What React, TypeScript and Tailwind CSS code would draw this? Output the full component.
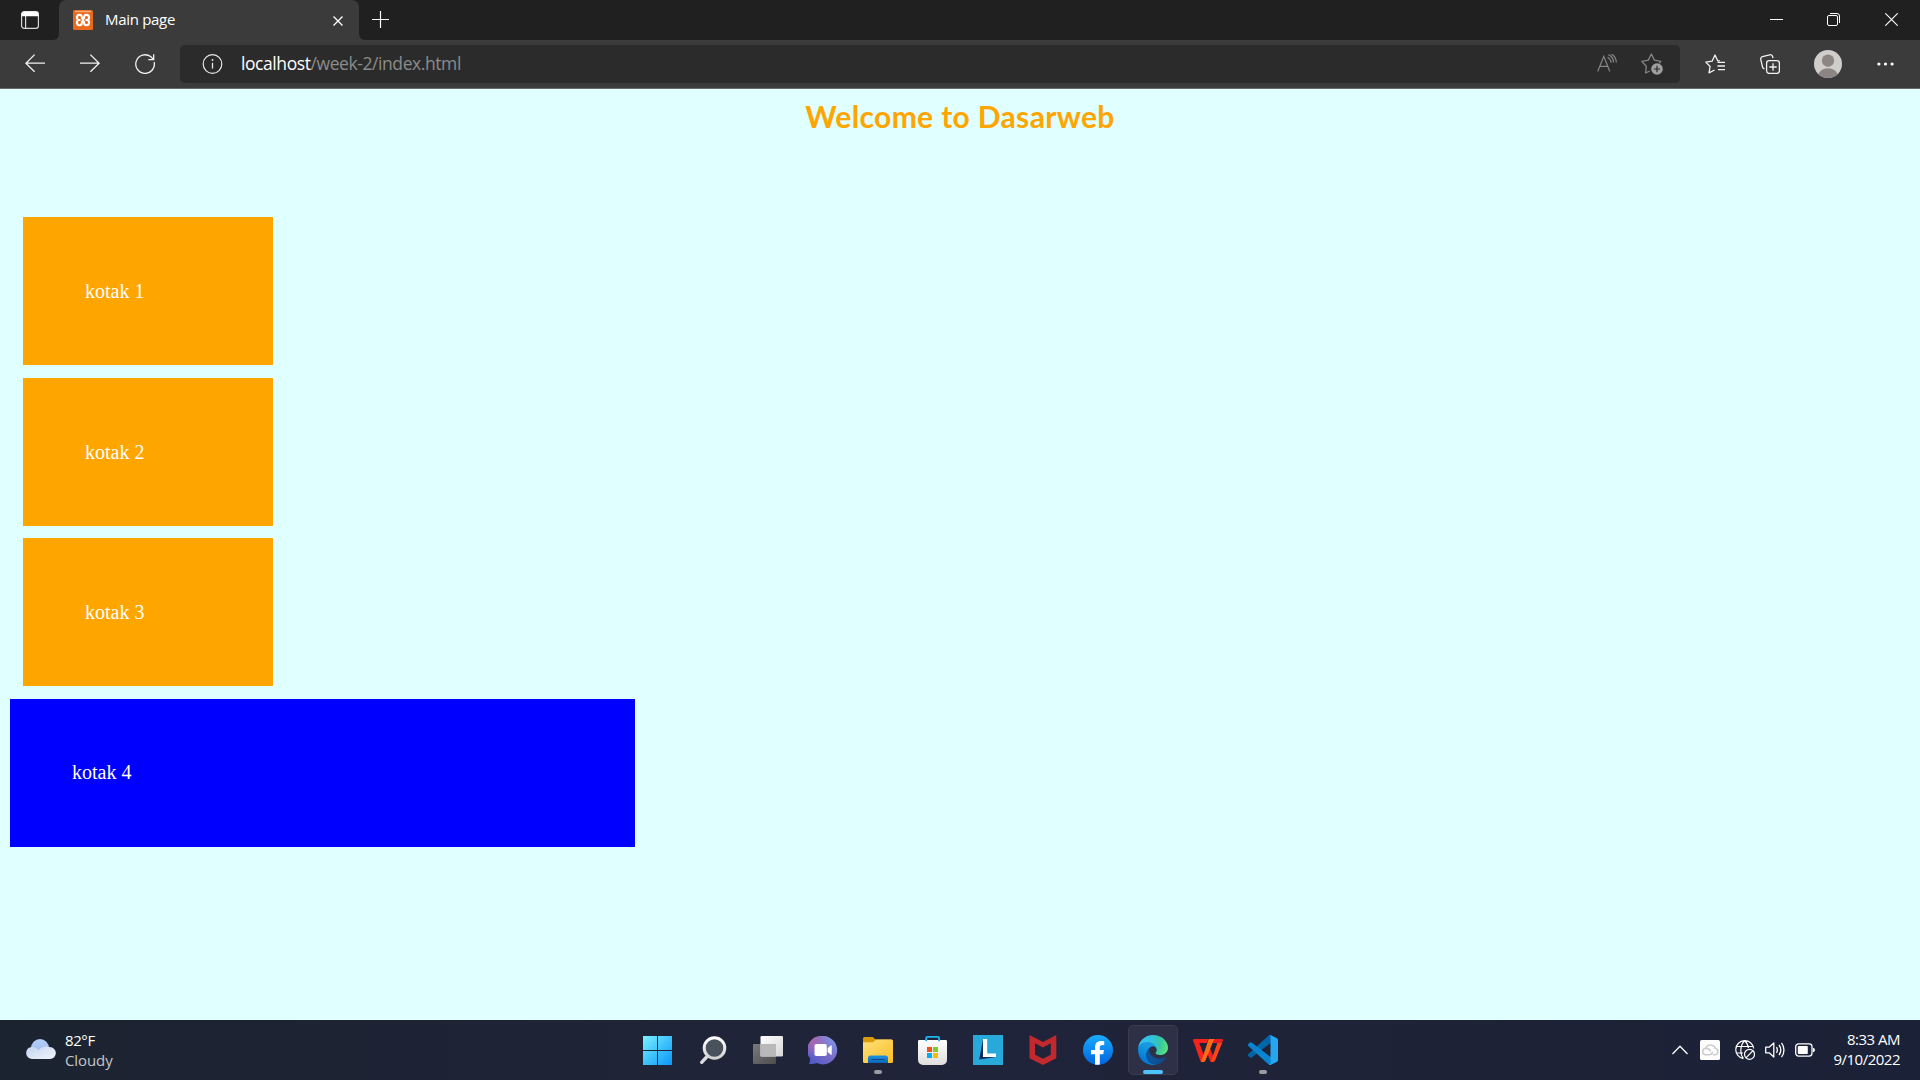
import type { ReactNode } from "react";

const ui = "font-['Open_Sans','Noto_Sans',sans-serif]";

/* ---------- Browser chrome ---------- */

function TabStrip() {
  return (
    <div className="flex h-10 items-stretch bg-[#202020]">
      <div className="flex w-[59px] items-center bg-[#3b3b3b]">
        <div className="flex h-full w-full items-center rounded-br-[6px] bg-[#202020] pl-[21px]">
          <svg width="18" height="18" viewBox="0 0 18 18">
            <rect x="0.6" y="0.6" width="16.8" height="16.8" rx="2.6" fill="none" stroke="#d8d8d8" strokeWidth="1.2" />
            <path d="M0.5 5.2V3A2.6 2.6 0 0 1 3 .4h12A2.6 2.6 0 0 1 17.500 3v2.200z" fill="#fff" />
            <path d="M4.600 5v12.500" stroke="#d8d8d8" strokeWidth="1.200" />
          </svg>
        </div>
      </div>
      <div className="flex w-[300px] bg-[#202020]">
        <div className="flex w-full items-center rounded-t-[7px] bg-[#3b3b3b] pl-[14px]">
          <svg width="20" height="20" viewBox="0 0 20 20">
            <rect width="20" height="20" rx="1.500" fill="#e96a1c" />
            <rect x="2" y="0.800" width="16" height="1.400" fill="#f6ab7b" />
            <path
              d="M5.400 10C3.200 8.900 3.300 5.200 6.200 4.900 8.700 4.700 8.900 6.300 9 8.300h2c.1-2 .3-3.600 2.800-3.400 2.900.3 3 4 .8 5.100 2.200 1.100 2.100 5-.8 5.300-2.500.2-2.700-1.500-2.800-3.600H9c-.1 2.100-.3 3.800-2.800 3.600-2.900-.3-3-4.200-.8-5.300z"
              fill="none"
              stroke="#fff"
              strokeWidth="2.100"
              strokeLinejoin="round"
            />
            <path d="M5.500 10h2M12.500 10h2" stroke="#fff" strokeWidth="2" />
            <path d="M8.800 10h2.400" stroke="#fff" strokeWidth="3.200" />
          </svg>
          <span className="mb-[2px] ml-[12px] text-[15px] leading-5 tracking-[-0.3px] text-white">Main page</span>
          <svg className="mt-[2px] mr-[16px] ml-auto" width="10" height="10" viewBox="0 0 10 10">
            <path d="M0.500 0.500l9 9M9.500 0.500l-9 9" stroke="#fff" strokeWidth="1.300" />
          </svg>
        </div>
      </div>
      <div className="flex grow bg-[#3b3b3b]">
        <div className="flex grow items-center rounded-bl-[6px] bg-[#202020]">
          <svg className="mb-px ml-[13px]" width="17" height="17" viewBox="0 0 17 17">
            <path d="M8.500 0v17M0 8.500h17" stroke="#fff" strokeWidth="1.200" />
          </svg>
          <div className="ml-auto flex pb-px">
            <div className="flex w-[57px] items-center justify-center">
              <svg width="13" height="13" viewBox="0 0 13 13">
                <path d="M0 6.500h13" stroke="#fff" strokeWidth="1" />
              </svg>
            </div>
            <div className="flex w-[57px] items-center justify-center">
              <svg width="13" height="13" viewBox="0 0 13 13" fill="none" stroke="#fff">
                <rect x="0.500" y="2.500" width="10" height="10" rx="1.500" />
                <path d="M3 0.500h7a2.500 2.500 0 0 1 2.500 2.500v7" />
              </svg>
            </div>
            <div className="flex w-[58px] items-center justify-center">
              <svg width="13" height="13" viewBox="0 0 13 13">
                <path d="M0.300 0.300l12.400 12.400M12.700 0.300L0.300 12.700" stroke="#fff" strokeWidth="1.100" />
              </svg>
            </div>
          </div>
        </div>
      </div>
    </div>
  );
}

function ToolCell({ children }: { children: ReactNode }) {
  return <div className="flex w-[50px] items-center justify-center">{children}</div>;
}

function Toolbar() {
  return (
    <div className="flex h-[49px] items-center border-b border-[#6a6a6a] bg-[#3b3b3b] pl-[10px]">
      <div className="flex gap-[5px]">
        <ToolCell>
          <svg width="20" height="20" viewBox="0 0 20 20" fill="none" stroke="#f2f2f2" strokeWidth="1.300">
            <path d="M20 9.200H.9M9.600.6L.9 9.200l8.700 8.600" />
          </svg>
        </ToolCell>
        <ToolCell>
          <svg width="20" height="20" viewBox="0 0 20 20" fill="none" stroke="#f2f2f2" strokeWidth="1.300">
            <path d="M0 9.200h19.100M10.400.6l8.700 8.600-8.700 8.600" />
          </svg>
        </ToolCell>
        <ToolCell>
          <svg width="20" height="20" viewBox="0 0 20 20" fill="none" stroke="#f2f2f2" strokeWidth="1.300">
            <path d="M19.200 8.200A9.300 9.300 0 1 1 15.600 2.600L18.600 5.400M18.700.3v5.300h-5.400" />
          </svg>
        </ToolCell>
      </div>
      <div className="ml-[10px] flex h-[38px] w-[1500px] items-center rounded-[5px] bg-[#2b2b2b] pr-[17px] pl-[22px]">
        <svg width="21" height="20" viewBox="0 0 21 20">
          <circle cx="10.500" cy="10" r="9.300" fill="none" stroke="#e8e8e8" strokeWidth="1.200" />
          <path d="M10.500 8.800v5.800" stroke="#e8e8e8" strokeWidth="1.300" />
          <circle cx="10.500" cy="6" r="0.900" fill="#e8e8e8" />
        </svg>
        <div className="mb-[2px] ml-[18px] text-[17.5px] leading-6 tracking-[-0.42px] text-[#8c8c8c]">
          <span className="text-white">localhost</span>/week-2/index.html
        </div>
        <svg className="ml-auto" width="20" height="20" viewBox="0 0 20 20" fill="none" stroke="#858585" strokeWidth="1.200">
          <path d="M0.700 17.500L6.800 2.300l6 15.200M2.900 12.300h7.800" />
          <path d="M10.500 3.200c2.200 1.100 3.400 3 3.600 5.500M11.500.6c3.100 1.400 5 4.300 5 7.900M14.300 0c3 1.700 4.900 4.600 5 8.500" />
        </svg>
        <svg className="ml-[24px]" width="22" height="22" viewBox="0 0 22 22">
          <path
            d="M8.800 18L4.600 20l.7-6.700L.8 8.400l6.500-1.300L10.300 1l3.200 6.100 6.300 1.300-1.600 1.900"
            fill="none"
            stroke="#858585"
            strokeWidth="1.300"
            strokeLinejoin="round"
          />
          <circle cx="16" cy="16" r="5.800" fill="#a0a0a0" />
          <path d="M16 12.800v6.400M12.800 16h6.400" stroke="#2b2b2b" strokeWidth="1.200" />
        </svg>
      </div>
      <div className="ml-[10px] flex gap-[5px]">
        <ToolCell>
          <svg width="20" height="20" viewBox="0 0 20 20" fill="none" stroke="#f2f2f2" strokeWidth="1.300">
            <path d="M9.500 16L4 18.800l1.100-6.300L.8 8.100l6.300-.9L10 1l2.700 5.800h2.200" strokeLinejoin="round" />
            <path d="M12.500 8.300H20M12.500 12H20M13 15.700h7" />
          </svg>
        </ToolCell>
        <ToolCell>
          <svg width="20" height="20" viewBox="0 0 20 20" fill="none" stroke="#f2f2f2" strokeWidth="1.300">
            <rect x="6.600" y="6.600" width="12.800" height="12.800" rx="2.600" />
            <path d="M13 9.300v7.400M9.300 13h7.400M4.500 15a3 3 0 0 1-2-2.200L.8 5.600a2.400 2.400 0 0 1 1.700-3L9.600.8a2.400 2.400 0 0 1 3 1.700l.4 1.700" />
          </svg>
        </ToolCell>
      </div>
      <div className="ml-[5px] flex w-[56px] justify-center">
        <svg width="28" height="28" viewBox="0 0 28 28">
          <defs>
            <clipPath id="avatar">
              <circle cx="14" cy="14" r="14" />
            </clipPath>
          </defs>
          <g clipPath="url(#avatar)">
            <rect width="28" height="28" fill="#d0cecb" />
            <circle cx="14" cy="10.700" r="6.200" fill="#8b8683" />
            <ellipse cx="14" cy="25.500" rx="9.500" ry="7.300" fill="#8b8683" />
          </g>
        </svg>
      </div>
      <div className="flex w-[58px] justify-center">
        <svg width="17" height="4" viewBox="0 0 17 4" fill="#fff">
          <circle cx="1.900" cy="2" r="1.600" />
          <circle cx="8.500" cy="2" r="1.600" />
          <circle cx="15.100" cy="2" r="1.600" />
        </svg>
      </div>
    </div>
  );
}

/* ---------- Page ---------- */

function Page() {
  return (
    <main className="flex h-[931px] flex-col items-start bg-[#e0ffff]">
      <h1 className="mt-[7px] w-full text-center font-['Lato',sans-serif] text-[30px] leading-10 font-bold tracking-[0.35px] text-[#ffa500]">
        Welcome to Dasarweb
      </h1>
      <section className="mt-[81px] flex flex-col gap-[12.6px] pl-[10px] font-['Liberation_Serif',serif] text-[20px] text-white">
        {["kotak 1", "kotak 2", "kotak 3"].map((t) => (
          <div key={t} className="ml-[13px] flex h-[148px] w-[250px] items-center bg-[#ffa500] pl-[62px]">
            {t}
          </div>
        ))}
        <div className="flex h-[148px] w-[625px] items-center bg-[#0000ff] pb-px pl-[62px]">kotak 4</div>
      </section>
    </main>
  );
}

/* ---------- Taskbar icons ---------- */

const StartIcon = () => (
  <svg width="30" height="30" viewBox="0 0 30 30">
    <defs>
      <linearGradient id="win" x1="0" y1="0" x2="30" y2="30" gradientUnits="userSpaceOnUse">
        <stop offset="0" stopColor="#7df3ff" />
        <stop offset="0.500" stopColor="#3fc3fb" />
        <stop offset="1" stopColor="#0c93f8" />
      </linearGradient>
    </defs>
    <path d="M0 1h14v14H0zM15 1h14v14H15zM0 16h14v14H0zM15 16h14v14H15z" fill="url(#win)" />
  </svg>
);

const SearchIcon = () => (
  <svg width="30" height="30" viewBox="0 0 30 30">
    <defs>
      <linearGradient id="lens" x1="0" y1="0" x2="0" y2="1">
        <stop offset="0" stopColor="#fff" />
        <stop offset="1" stopColor="#d2d2d2" />
      </linearGradient>
    </defs>
    <path d="M10 20.500l-6.300 6.800" stroke="#dcdcdc" strokeWidth="3.400" strokeLinecap="round" />
    <circle cx="16.500" cy="13" r="10.300" fill="#49515c" stroke="url(#lens)" strokeWidth="3" />
  </svg>
);

const TaskViewIcon = () => (
  <svg width="30" height="30" viewBox="0 0 30 30">
    <defs>
      <linearGradient id="tvf" x1="0" y1="0" x2="1" y2="1">
        <stop offset="0" stopColor="#fff" />
        <stop offset="1" stopColor="#d6d6d6" />
      </linearGradient>
      <linearGradient id="tvb" x1="0" y1="0" x2="1" y2="1">
        <stop offset="0" stopColor="#7a7a7a" />
        <stop offset="1" stopColor="#4d4d4d" />
      </linearGradient>
    </defs>
    <rect x="0" y="9" width="23" height="20" rx="1.200" fill="url(#tvb)" />
    <rect x="7.500" y="1" width="22.500" height="20.500" rx="1.200" fill="url(#tvf)" />
    <rect x="7.500" y="9" width="15.500" height="12.500" fill="#b9b9b9" />
  </svg>
);

const ChatIcon = () => (
  <svg width="30" height="30" viewBox="0 0 30 30">
    <defs>
      <linearGradient id="chat" x1="0.900" y1="0.100" x2="0.200" y2="1">
        <stop offset="0" stopColor="#7f95ea" />
        <stop offset="0.500" stopColor="#7a6cc8" />
        <stop offset="1" stopColor="#5059c9" />
      </linearGradient>
      <radialGradient id="chatPink" cx="0.200" cy="0.200" r="0.550">
        <stop offset="0" stopColor="#a868ae" />
        <stop offset="1" stopColor="#a868ae" stopOpacity="0" />
      </radialGradient>
    </defs>
    <path d="M15 1a14.200 14.200 0 1 1-6.200 27C6.500 29 3.500 29.300.8 29c1.200-1.600 1.600-3.500 1.200-5.500A14.200 14.200 0 0 1 15 1z" fill="url(#chat)" />
    <path d="M15 1a14.200 14.200 0 1 1-6.200 27C6.500 29 3.500 29.300.8 29c1.200-1.600 1.600-3.500 1.200-5.500A14.200 14.200 0 0 1 15 1z" fill="url(#chatPink)" />
    <rect x="6.500" y="9" width="12.300" height="12" rx="1.800" fill="#fff" />
    <path d="M20 13.300l3.300-2.700v9L20 17z" fill="#fff" stroke="#fff" strokeWidth="0.800" strokeLinejoin="round" />
  </svg>
);

const FolderIcon = () => (
  <svg width="30" height="30" viewBox="0 0 30 30">
    <defs>
      <linearGradient id="fold" x1="0" y1="0" x2="1" y2="1">
        <stop offset="0" stopColor="#ffe07c" />
        <stop offset="1" stopColor="#fbbf26" />
      </linearGradient>
      <linearGradient id="foldBlue" x1="0" y1="0" x2="0" y2="1">
        <stop offset="0" stopColor="#1b94e2" />
        <stop offset="1" stopColor="#0f63b5" />
      </linearGradient>
    </defs>
    <path d="M0 3.500A1.500 1.500 0 0 1 1.500 2h8.200l3 2.500H28A1.500 1.500 0 0 1 29.500 6v6H0z" fill="#dc9c0a" />
    <path d="M0 7.200h10l3-2.700h15.500A1.500 1.500 0 0 1 30 6v20.500A1.500 1.500 0 0 1 28.500 28h-27A1.500 1.500 0 0 1 0 26.500z" fill="url(#fold)" />
    <path d="M5 28v-5a2.500 2.500 0 0 1 2.500-2.500h15A2.500 2.500 0 0 1 25 23v5z" fill="url(#foldBlue)" />
    <path d="M9 24.500h12" stroke="#0b4a8f" strokeWidth="1.200" strokeLinecap="round" />
  </svg>
);

const StoreIcon = () => (
  <svg width="30" height="30" viewBox="0 0 30 30">
    <defs>
      <linearGradient id="store" x1="0" y1="0" x2="0" y2="1">
        <stop offset="0" stopColor="#fff" />
        <stop offset="1" stopColor="#dedede" />
      </linearGradient>
    </defs>
    <path d="M0 6.200A1.200 1.200 0 0 1 1.200 5h26.600A1.200 1.200 0 0 1 29 6.200V25a5 5 0 0 1-5 5H5a5 5 0 0 1-5-5z" fill="url(#store)" />
    <path d="M8.200 6.300V3.200A1.300 1.300 0 0 1 9.500 1.900h10.300a1.300 1.300 0 0 1 1.300 1.300v3.100" fill="none" stroke="#20b4ee" strokeWidth="1.900" />
    <path d="M9 12h5v5H9z" fill="#f1511b" />
    <path d="M15 12h5v5h-5z" fill="#80cc28" />
    <path d="M9 18h5v5H9z" fill="#00adef" />
    <path d="M15 18h5v5h-5z" fill="#fbbc09" />
  </svg>
);

const LenovoIcon = () => (
  <svg width="30" height="30" viewBox="0 0 30 30">
    <rect width="30" height="30" fill="#27aad9" />
    <path d="M10 4.500L6.200 24.500 23 22l-9-1z" fill="#0a2a66" />
    <path d="M10 4h4.200v14.500H23V22H10z" fill="#fff" />
  </svg>
);

const McAfeeIcon = () => (
  <svg width="30" height="30" viewBox="0 0 30 30">
    <path
      d="M1.500 0L15 7 28.300 0v23.300L15 30 1.500 23.300zM7 8.300v11.500l8 4 7.800-4V8.300L15 12.600z"
      fill="#c1292e"
      fillRule="evenodd"
    />
  </svg>
);

const FacebookIcon = () => (
  <svg width="30" height="30" viewBox="0 0 30 30">
    <defs>
      <linearGradient id="fb" x1="0" y1="0" x2="0" y2="1">
        <stop offset="0" stopColor="#18acfe" />
        <stop offset="1" stopColor="#0163e0" />
      </linearGradient>
    </defs>
    <circle cx="15" cy="15" r="15" fill="url(#fb)" />
    <path d="M20.200 19.300l.8-4.300h-4.200v-2.400c0-1.600.8-2.600 2.500-2.600h1.900V6.200c-1.100-.2-2.100-.3-3.100-.3-3.700 0-6 2.200-6 6V15H8v4.300h4V29.600a15 15 0 0 0 4.800 0V19.300z" fill="#fff" />
  </svg>
);

const EdgeIcon = () => (
  <svg width="30" height="30" viewBox="0 0 256 256">
    <defs>
      <linearGradient id="e1" x1="58" y1="177" x2="236" y2="177" gradientUnits="userSpaceOnUse">
        <stop offset="0" stopColor="#0c59a4" />
        <stop offset="1" stopColor="#114a8b" />
      </linearGradient>
      <linearGradient id="e2" x1="150" y1="90" x2="45" y2="230" gradientUnits="userSpaceOnUse">
        <stop offset="0" stopColor="#1b9de2" />
        <stop offset="0.400" stopColor="#1595df" />
        <stop offset="1" stopColor="#0078d4" />
      </linearGradient>
      <radialGradient id="e3" cx="26" cy="48" r="256" gradientUnits="userSpaceOnUse">
        <stop offset="0" stopColor="#35c1f1" />
        <stop offset="0.350" stopColor="#2fc2df" />
        <stop offset="0.650" stopColor="#36c7a5" />
        <stop offset="1" stopColor="#66eb6e" />
      </radialGradient>
    </defs>
    <path d="M231 190.500c-3.400 1.800-6.900 3.400-10.500 4.700a101.500 101.500 0 0 1-35.900 6.500c-47.300 0-88.500-32.500-88.500-74.300a31.500 31.500 0 0 1 16.400-27.300c-42.800 1.800-53.800 46.400-53.800 72.500 0 74 68.100 81.400 82.800 81.400 7.900 0 19.800-2.300 27-4.600l1.300-.4a128.300 128.300 0 0 0 66.600-52.800 4 4 0 0 0-5.400-5.700z" fill="url(#e1)" />
    <path d="M105.700 241.400a79.200 79.200 0 0 1-22.700-21.300 80.700 80.700 0 0 1 29.500-120c3.200-1.500 8.500-4.100 15.600-4a32.400 32.400 0 0 1 25.700 13 31.900 31.900 0 0 1 6.300 18.700c0-.2 24.500-79.600-80-79.600-43.900 0-80 41.600-80 78.200a130.200 130.200 0 0 0 12.100 56 128 128 0 0 0 156.400 67 75.500 75.500 0 0 1-62.800-8z" fill="url(#e2)" />
    <path d="M152.300 148.900c-.9 1-3.400 2.500-3.400 5.600 0 2.600 1.700 5.200 4.800 7.300 14.300 10 41.400 8.600 41.500 8.600a59.600 59.600 0 0 0 30.300-8.300 61.400 61.400 0 0 0 30.400-52.900c.3-22.400-8-37.300-11.300-43.900C223.500 23.900 177.700 0 128 0A128 128 0 0 0 0 126.200c.5-36.500 36.800-66 80-66 3.500 0 23.500.3 42 10a72.600 72.600 0 0 1 30.900 29.300c6.100 10.600 7.200 24.100 7.200 29.500s-2.700 13.300-7.800 19.900z" fill="url(#e3)" />
  </svg>
);

const WpsIcon = () => (
  <svg width="30" height="30" viewBox="0 0 30 30">
    <path d="M1 4h14.500l-1.700 4H6.300L11 20.500 9.500 27h-.7a1.500 1.500 0 0 1-1.400-.9L.1 5.400A1 1 0 0 1 1 4z" fill="#f5231c" />
    <path d="M16.400 12L20.300 21.500l-.8 5.500h-.9a1.500 1.500 0 0 1-1.400-.9L14 17.500z" fill="#f5231c" />
    <path d="M20.800 4H29a1 1 0 0 1 .9 1.400L28.600 9.500 24 8h-4.800z" fill="#e81d1f" />
    <path d="M15.700 4h5.500L12.400 25.500a2.200 2.200 0 0 1-2.100 1.500H8z" fill="#ff6a18" />
    <path d="M24.400 8h4.600l-6.900 17.600A2.200 2.200 0 0 1 20 27h-2.300z" fill="#ff4417" />
  </svg>
);

const CodeIcon = () => (
  <svg width="30" height="30" viewBox="0 0 100 100">
    <path d="M96.460 10.800L75.860.88a6.230 6.230 0 0 0-7.100 1.200L1.300 63.580a4.170 4.170 0 0 0 0 6.160l5.500 5a4.170 4.170 0 0 0 5.300.24L93.360 13.370A4.130 4.130 0 0 1 100 16.660v-.24a6.250 6.250 0 0 0-3.540-5.630z" fill="#0065a9" />
    <path d="M96.460 89.200L75.860 99.120a6.230 6.230 0 0 1-7.100-1.200L1.300 36.420a4.170 4.170 0 0 1 0-6.160l5.500-5a4.170 4.170 0 0 1 5.300-.24L93.360 86.630A4.130 4.130 0 0 0 100 83.340v.24a6.250 6.250 0 0 1-3.540 5.630z" fill="#0a84cf" />
    <path d="M75.860 99.130a6.230 6.230 0 0 1-7.100-1.210A3.660 3.660 0 0 0 75 95.330V4.670a3.660 3.660 0 0 0-6.250-2.590 6.230 6.230 0 0 1 7.100-1.210l20.600 9.900A6.250 6.250 0 0 1 100 16.400v67.180a6.250 6.250 0 0 1-3.540 5.630z" fill="#27a5f0" />
  </svg>
);

type App = { id: string; icon: ReactNode; state?: "open" | "active" };

const apps: App[] = [
  { id: "start", icon: <StartIcon /> },
  { id: "search", icon: <SearchIcon /> },
  { id: "taskview", icon: <TaskViewIcon /> },
  { id: "chat", icon: <ChatIcon /> },
  { id: "files", icon: <FolderIcon />, state: "open" },
  { id: "store", icon: <StoreIcon /> },
  { id: "lenovo", icon: <LenovoIcon /> },
  { id: "mcafee", icon: <McAfeeIcon /> },
  { id: "facebook", icon: <FacebookIcon /> },
  { id: "edge", icon: <EdgeIcon />, state: "active" },
  { id: "wps", icon: <WpsIcon /> },
  { id: "code", icon: <CodeIcon />, state: "open" },
];

function TaskButton({ app }: { app: App }) {
  const active = app.state === "active";
  return (
    <div
      className={
        active
          ? "flex h-[50px] w-[50px] flex-col items-center rounded-[5px] border border-[#3a3d50] bg-[#2d3046] pt-[9px]"
          : "flex h-[50px] w-[50px] flex-col items-center pt-[10px]"
      }
    >
      {app.icon}
      {active && <div className="mt-[5px] h-1 w-5 rounded-full bg-[#4cc2ff]" />}
      {app.state === "open" && <div className="mt-[5px] h-1 w-2 rounded-full bg-[#9a9ba3]" />}
    </div>
  );
}

function Tray() {
  return (
    <div className="ml-auto flex items-center pr-5">
      <svg width="16" height="10" viewBox="0 0 16 10">
        <path d="M0.500 9L8 1.200 15.500 9" fill="none" stroke="#fff" strokeWidth="1.300" />
      </svg>
      <svg className="ml-3" width="20" height="20" viewBox="0 0 20 20">
        <rect width="20" height="20" rx="1.500" fill="#fff" />
        <path
          d="M13.500 14.800H15a3.300 3.300 0 0 0 .3-6.500A5.200 5.200 0 0 0 5.600 8.300a3.300 3.300 0 0 0-.4 6.500h4.200c1.700 0 2.600-1 3.100-2.200"
          fill="none"
          stroke="#cdcdcd"
          strokeWidth="1.600"
          strokeLinecap="round"
        />
        <path d="M5.800 8.400c2.300-.2 3.700.7 4.700 2.600" fill="none" stroke="#cdcdcd" strokeWidth="1.500" strokeLinecap="round" />
      </svg>
      <svg className="ml-[15px]" width="20" height="20" viewBox="0 0 20 20" fill="none" stroke="#fff" strokeWidth="1.200">
        <path d="M8.500 18.600A9 9 0 1 1 18.700 8.500M1.200 6.500h17.400M1.200 13H8M8.300 18.500C4.800 14.500 4.800 5 9.700.7c2.200 1.900 3.400 4.400 3.700 7.300" />
        <circle cx="14.500" cy="14.300" r="5" />
        <path d="M11 17.900l7-7.200" />
      </svg>
      <svg className="ml-[10px]" width="20" height="20" viewBox="0 0 20 20" fill="none" stroke="#fff" strokeWidth="1.300">
        <path d="M0.700 7.200h3.500L8.800 3v14l-4.600-4.200H.7z" strokeLinejoin="round" />
        <path d="M11.500 7.200c1 1.700 1 3.900 0 5.600M14 5c2.200 3 2.200 7 0 10M16.500 2.800c3.300 4.300 3.300 10.100 0 14.400" />
      </svg>
      <svg className="ml-[10px]" width="20" height="14" viewBox="0 0 20 14">
        <rect x="0.700" y="0.900" width="16.300" height="12.200" rx="2.800" fill="none" stroke="#fff" strokeWidth="1.300" />
        <rect x="2.800" y="3" width="10" height="8" rx="0.800" fill="#fff" />
        <path d="M18 4.800a2.200 2.200 0 0 1 2 2.200 2.200 2.200 0 0 1-2 2.200z" fill="#fff" />
      </svg>
      <div className="mb-[2px] w-[85px] text-right text-[15px] leading-5 tracking-[-0.5px] text-white">
        <div>8:33 AM</div>
        <div>9/10/2022</div>
      </div>
    </div>
  );
}

function Taskbar() {
  return (
    <footer className="flex h-[60px] items-center bg-linear-to-r from-[#1c2330] via-[#20243a] to-[#1b2136]">
      <div className="flex w-[633px] items-center pl-[26px]">
        <svg className="mb-[3px]" width="30" height="20" viewBox="0 0 30 20">
          <defs>
            <linearGradient id="cl1" x1="0" y1="0" x2="0" y2="1">
              <stop offset="0" stopColor="#b4cdf8" />
              <stop offset="1" stopColor="#9db9ea" />
            </linearGradient>
            <linearGradient id="cl2" x1="0" y1="0" x2="1" y2="1">
              <stop offset="0" stopColor="#c3d4ee" />
              <stop offset="1" stopColor="#f0f4fa" />
            </linearGradient>
          </defs>
          <circle cx="14" cy="9" r="9" fill="url(#cl1)" />
          <path d="M6.300 20a6.100 6.100 0 1 1 4.500-10.200c.8.500 1.300 1 1.800 1.700C14.300 9 17 7.500 20.500 7.500A6.500 6.500 0 0 1 23.700 8a6 6 0 0 1 .3 12z" fill="url(#cl2)" />
        </svg>
        <div className="ml-[9px] text-[15px] leading-5">
          <div className="tracking-[-0.4px] text-white">82°F</div>
          <div className="tracking-[-0.1px] text-[#c4c6ca]">Cloudy</div>
        </div>
      </div>
      <div className="flex gap-[5px]">
        {apps.map((a) => (
          <TaskButton key={a.id} app={a} />
        ))}
      </div>
      <Tray />
    </footer>
  );
}

export default function App() {
  return (
    <div className={`flex h-[1080px] w-[1920px] flex-col overflow-hidden ${ui}`}>
      <TabStrip />
      <Toolbar />
      <Page />
      <Taskbar />
    </div>
  );
}
